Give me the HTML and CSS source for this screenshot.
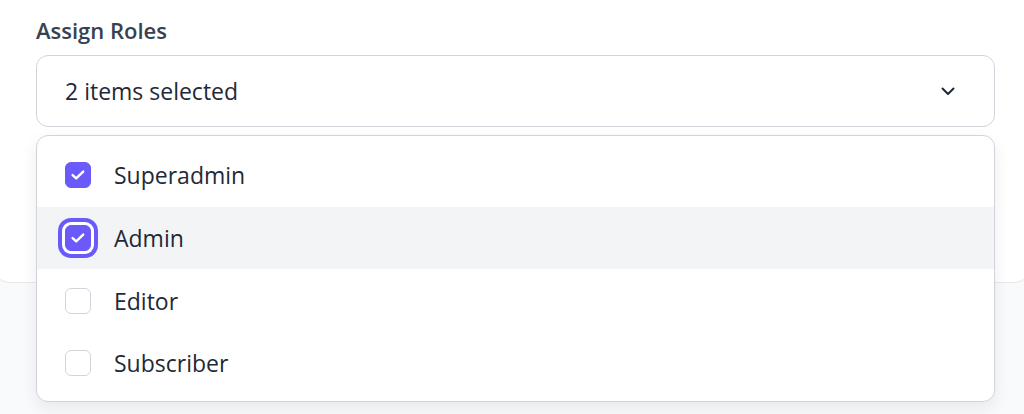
FILE: index.html
```html
<!DOCTYPE html>
<html lang="en">
<head>
	<meta charset="UTF-8">
	<title>Assign Roles</title>
	<link rel="stylesheet" href="styles.css">
</head>
<body>

<div class="card">
	<div class="field">
		<label class="label">Assign Roles</label>
		<div class="select-wrap">
			<div class="select">
				<span>2 items selected</span>
				<svg class="chevron" width="20" height="20" viewBox="0 0 20 20" fill="none"><path d="M4.5 7.5 10 13l5.5-5.5" stroke="#1f2937" stroke-width="2" stroke-linecap="round" stroke-linejoin="round"/></svg>
			</div>
			<ul class="menu">
				<li><span class="box checked"><svg viewBox="0 0 16 16" width="16" height="16"><path d="M2.6 8.1 6.2 11.4 13.2 4.6" stroke="#fff" stroke-width="2.4" fill="none" stroke-linecap="round" stroke-linejoin="round"/></svg></span>Superadmin</li>
				<li class="hover"><span class="box checked focus"><svg viewBox="0 0 16 16" width="16" height="16"><path d="M2.6 8.1 6.2 11.4 13.2 4.6" stroke="#fff" stroke-width="2.4" fill="none" stroke-linecap="round" stroke-linejoin="round"/></svg></span>Admin</li>
				<li><span class="box"></span>Editor</li>
				<li><span class="box"></span>Subscriber</li>
			</ul>
		</div>
	</div>
</div>

</body>
</html>
```

FILE: styles.css
```css
html,body{min-height: 100%;}
body{margin: 0;min-height: 414px;background: #f9fafb;font-family: "Open Sans", Lato, sans-serif;color: #1f2937;}
.card{height: 303px;box-sizing: border-box;margin: -20px -8px 0 -8px;background: #fff;border: 1px solid #e5e7eb;border-radius: 18px;}
.field{padding: 35px 36px 0 43px;}
.label{display: block;font-size: 22px;line-height: 28px;font-weight: 600;color: #374151;margin-bottom: 11px;}
.select-wrap{position: relative;}
.select{height: 72px;box-sizing: border-box;border: 1px solid #d1d5db;border-radius: 12px;background: #fff;display: flex;align-items: center;justify-content: space-between;padding: 0 36px 0 28px;font-size: 23px;font-weight: 500;color: #1f2937;}
.chevron{display: block;}
.menu{position: absolute;left: 0;right: 0;top: 80px;margin: 0;padding: 8px 0 6px;list-style: none;background: #fff;border: 1px solid #d1d5db;border-radius: 12px;box-shadow: 0 6px 16px rgba(17,24,39,0.08);z-index: 2;}
.menu li{height: 62.67px;display: flex;align-items: center;gap: 23px;padding-left: 28px;font-size: 23px;font-weight: 500;color: #1f2937;}
.menu li.hover{background: #f3f4f6;}
.box{width: 26px;height: 26px;box-sizing: border-box;border: 1.5px solid #d1d5db;border-radius: 6px;background: #fff;display: flex;align-items: center;justify-content: center;flex-shrink: 0;}
.box svg{flex-shrink: 0;}
.box.checked{background: #6a5af9;border-color: #6a5af9;}
.box.focus{box-shadow: 0 0 0 3px #fff, 0 0 0 7px #6a5af9;}
```
